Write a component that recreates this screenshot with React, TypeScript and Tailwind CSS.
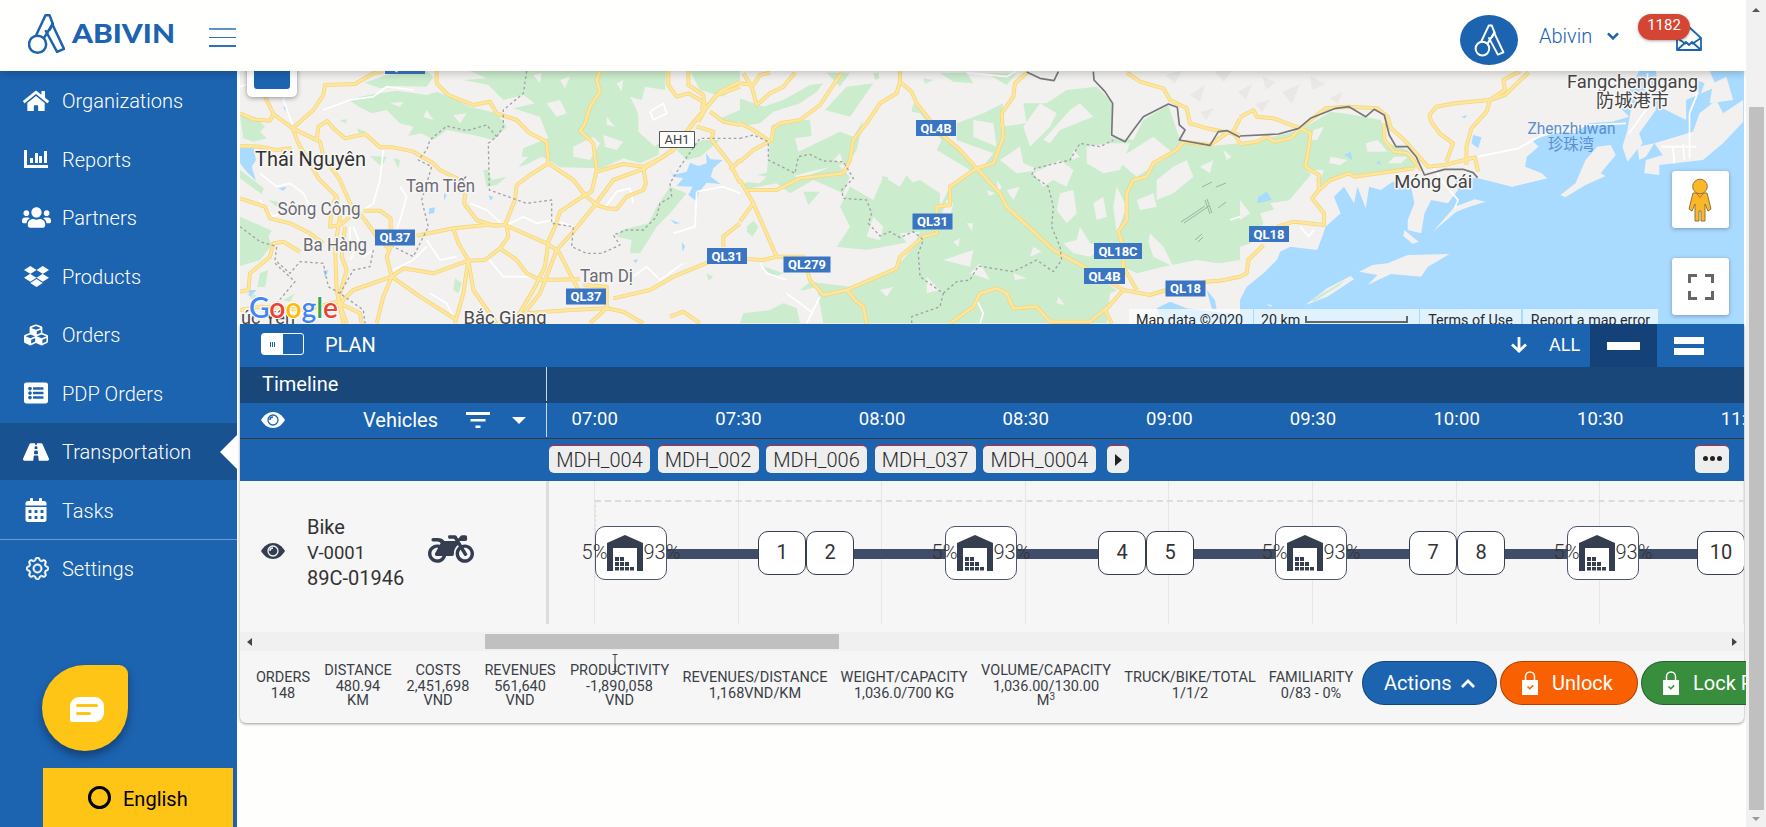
import React from "react";
import {
  FaHome, FaUsers, FaDropbox, FaCubes, FaListAlt, FaRoad, FaCalendarAlt, FaMotorcycle,
} from "react-icons/fa";
import { BsGear } from "react-icons/bs";

const MARK = (
  <g fill="none" strokeLinejoin="round" strokeLinecap="round">
    <circle cx="113" cy="132" r="26" />
    <path d="M109 104 L137 44 H149 L159 70 L150 88" />
    <path d="M133 112 L159 70" />
    <path d="M138 92 L172 155 L193 146 L158 72" />
  </g>
);

const ChartIcon = () => (
  <svg viewBox="0 0 24 18" className="h-[18px] w-[24px]" fill="white">
    <path d="M0 0h3v15h21v3H0z" />
    <path d="M6 8h3v5H6zM11 3h3v10h-3zM15 6h3v7h-3zM20 1h3v12h-3z" />
  </svg>
);

const NAV: { label: string; icon: React.ReactNode; active?: boolean; line?: boolean }[] = [
  { label: "Organizations", icon: <FaHome size={26} /> },
  { label: "Reports", icon: <ChartIcon /> },
  { label: "Partners", icon: <FaUsers size={29} /> },
  { label: "Products", icon: <FaDropbox size={25} /> },
  { label: "Orders", icon: <FaCubes size={24} /> },
  { label: "PDP Orders", icon: <FaListAlt size={24} /> },
  { label: "Transportation", icon: <FaRoad size={26} />, active: true },
  { label: "Tasks", icon: <FaCalendarAlt size={24} />, line: true },
  { label: "Settings", icon: <BsGear size={23} className="ml-[3px]" strokeWidth={0.4} /> },
];

function Header() {
  return (
    <header className="relative z-20 flex h-[71px] shrink-0 items-start bg-[#fffffe] shadow-[0_2px_8px_rgba(0,0,0,0.22)]">
      <svg viewBox="84 38 112 126" className="ml-[28px] mt-[13px] h-[42px] w-[37px]" stroke="#1c63b0" strokeWidth="7.500">{MARK}</svg>
      <svg viewBox="0 0 104 30" className="ml-[7px] mt-[18px] h-[30px] w-[104px] overflow-visible">
        <text x="0" y="25.3" textLength="103" lengthAdjust="spacingAndGlyphs" fill="#1c63b0" fontFamily="Lato, sans-serif" fontWeight="900" fontSize="27">ABIVIN</text>
      </svg>
      <div className="ml-[33px] mt-[28px] flex w-[27px] flex-col gap-[7px]">
        <div className="h-[1.5px] bg-[#5d93ca]" />
        <div className="h-[1.5px] bg-[#2f72b8]" />
        <div className="h-[1.5px] bg-[#2f72b8]" />
      </div>
      <div className="ml-auto mt-[15px] flex h-[50px] w-[58px] items-center justify-center rounded-[50%] bg-[#1c63b0]">
        <svg viewBox="84 38 112 126" className="h-[33px] w-[33px]" stroke="white" strokeWidth="7.500">{MARK}</svg>
      </div>
      <span className="ml-[21px] mt-[21px] w-[52px] text-[20px] leading-[30px] font-light text-[#1c63b0]">Abivin</span>
      <svg viewBox="0 0 12 8" className="ml-[16px] mt-[32px] h-[8px] w-[12px]" fill="none" stroke="#1c63b0" strokeWidth="2.6"><path d="M1 1.3l5 5 5-5" /></svg>
      <div className="relative ml-[57px] mr-[44px] mt-[26px] h-[25px] w-[26px]">
        <svg viewBox="0 0 26 25" className="h-full w-full" fill="none" stroke="#1c63b0" strokeWidth="1.8" strokeLinejoin="round">
          <path d="M1 12L13 1l12 11v12H1z" /><path d="M1 12l9 6M25 12l-9 6M1 24l9-8 3 3 3-3 9 8" />
        </svg>
        <span className="absolute -left-[38px] -top-[12px] flex h-[26px] w-[52px] items-center justify-center rounded-full bg-[#d54533] text-[15px] text-white shadow-[0_1px_3px_rgba(0,0,0,0.35)]">
          <span className="-mt-[3px]">1182</span>
        </span>
      </div>
    </header>
  );
}

function Sidebar() {
  return (
    <nav className="relative flex w-[237px] shrink-0 flex-col bg-[#1c63b0] pt-px text-white">
      {NAV.map((n) => (
        <div key={n.label} className={"relative mb-[1.5px] flex h-[57px] shrink-0 items-center " + (n.active ? "bg-[#195290]" : "")}>
          <div className="ml-[21px] flex w-[30px] justify-center">{n.icon}</div>
          <span className="ml-[11px] pt-px text-[20px] font-light">{n.label}</span>
          {n.active && <div className="ml-auto h-0 w-0 border-y-[17px] border-r-[17px] border-y-transparent border-r-white" />}
          {n.line && <div className="absolute -bottom-px left-0 h-px w-full bg-[#6a9bd0]" />}
        </div>
      ))}
      <div className="ml-[42px] mt-[66px] flex h-[86px] w-[86px] shrink-0 items-center justify-center rounded-[43px] rounded-tr-[9px] bg-[#fec416] shadow-[0_5px_8px_rgba(0,0,0,0.35)]">
        <svg viewBox="0 0 34 25" className="ml-[4px] mt-[3px] h-[25px] w-[34px]">
          <path d="M9 0h16a9 9 0 019 9v7a9 9 0 01-9 9H2a2 2 0 01-2-2V9a9 9 0 019-9z" fill="white" />
          <path d="M7.500 8.500h19M7.500 16.500h12" stroke="#fec416" strokeWidth="3" strokeLinecap="round" />
        </svg>
      </div>
      <div className="ml-[43px] mt-auto flex h-[59px] w-[190px] shrink-0 items-center bg-[#fec416] text-[20px] text-black">
        <div className="ml-[45px] h-[23px] w-[23px] rounded-full border-[3.5px] border-black" />
        <span className="ml-[12px] pt-[2px]">English</span>
      </div>
    </nav>
  );
}

type Tile = { at: string; green: string[]; land: string[]; water: string[]; shore: string[]; minor: string[]; roads: string[]; dash: string[]; border: string[] };

const TILES: Tile[] = [
  {
    at: "translate(240 60) scale(0.33333)",
    green: [
      "690,33 1278,33 1275,90 1215,80 1205,120 1170,110 1190,150 1210,215 1262,240 1255,285 1200,310 1150,295 1085,325 960,322 925,300 905,290 855,315 835,320 865,290 845,290 850,265 910,240 925,235 900,170 820,145 885,130 850,105 790,120 745,75 670,60 740,55",
      "375,68 440,45 560,33 580,52 560,80 470,78 420,85",
      "325,120 385,105 470,92 560,105 590,95 640,115 690,140 770,160 800,200 760,240 700,225 620,210 580,240 545,220 505,228 520,200 480,190 440,150 395,160 365,145",
      "0,165 45,170 75,200 60,215 80,235 40,245 10,235", "0,470 95,512 85,530 95,555 60,600 0,618", "0,330 72,385 65,402 0,355",
      "60,640 85,630 75,680 52,682", "1390,240 1440,240 1380,290 1340,300 1310,270", "1290,380 1340,400 1290,460 1250,500 1200,580 1170,578 1175,540 1130,530 1145,510 1225,490 1250,440",
      "730,330 745,330 755,360 800,350 770,375 740,380", "390,288 440,290 425,320", "460,295 480,300 475,325", "85,420 115,425 110,440", "300,180 320,178 318,192", "130,720 165,700 150,725", "1350,33 1500,33 1500,60 1450,110 1380,90",
      "645,655 640,690 655,700 665,670", "20,700 50,705 40,720", "350,205 378,215 362,228", "1400,640 1420,650 1405,662", "1430,180 1500,150 1500,185 1460,190",
    ],
    land: ["1195,145 1260,95 1345,110 1390,120 1360,180 1330,220 1275,230 1245,260 1195,215", "920,130 960,120 980,160 950,170", "1100,170 1125,200 1100,195", "1000,260 1060,230 1080,250 1050,300 1000,290", "450,130 490,125 480,140", "640,165 680,160 660,190", "560,150 580,180 550,170", "1090,225 1150,245 1130,270 1095,260", "880,45 905,40 900,70", "960,60 990,50 975,85", "1130,70 1150,60 1145,95"],
    water: [
      "0,265 40,262 48,300 35,320 48,362 20,335 0,310", "1288,328 1300,345 1340,335 1350,308 1375,318 1400,310 1398,280 1412,298 1448,300 1420,325 1412,350 1442,372 1400,368 1378,395 1368,422 1345,405 1358,380 1310,378 1330,355 1300,350",
      "568,445 585,442 582,460 566,462", "115,385 140,380 130,392", "250,630 265,632 255,655", "1325,545 1335,560 1328,575", "745,405 760,412 752,422", "1180,600 1195,598 1186,610", "612,400 620,405 612,422", "25,690 50,690 30,710", "130,140 138,140 136,155", "1290,478 1320,490 1305,492",
    ],
    shore: [],
    minor: [
      "150,50 130,120 160,200", "250,150 330,120 400,110 440,80 520,90", "0,80 60,60", "60,340 110,380 150,370 190,400 230,480", "430,270 420,360 400,430 370,450", "480,380 500,410 480,480 470,510", "690,430 740,450 790,495", "800,495 850,470 890,490 940,480 1000,500", "560,540 600,600 650,590", "560,560 520,600 460,630", "740,590 790,650 870,650", "1370,395 1450,380 1500,400", "1370,395 1365,500 1300,520", "1230,155 1270,130 1280,160 1240,180 1230,155", "1180,650 1220,620 1260,660 1330,610", "1090,450 1130,395 1170,385 1180,430", "60,420 100,470 170,430", "340,500 360,550 330,600", "570,700 620,730 650,790", "330,500 330,560 370,590 400,570",
    ],
    roads: [
      "0,160 40,178 90,182 100,162 75,110", "100,162 158,205 180,185 220,150 250,105 255,75 345,72 400,40 430,33", "158,205 175,250 235,355 290,410 300,470 285,560 290,690 310,790", "158,205 240,245 250,290 300,360 330,430 375,480 410,530 450,570", "230,240 235,200 262,183 280,205 315,235 375,222 420,262 460,262 520,275 580,310 600,330 680,370 672,430 710,480 760,497 795,495",
      "590,33 590,70 625,105 700,135 750,125 770,160 830,180 870,220 920,245 925,310 870,345 830,375 825,420 795,495", "925,310 1000,360 1035,405 1070,435 1100,445 1130,447 1160,410 1210,390 1218,370 1210,325", "1080,33 1070,60 1080,95 1050,140 1035,190 1020,212 1060,250 1070,330 1055,395 1035,405 960,455 945,500 925,545 915,620 880,690 820,790",
      "1500,80 1430,105 1360,190 1310,260 1270,290 1210,320 1150,312 1070,335", "1500,65 1440,95 1350,200 1300,270 1215,325 1120,360 1065,435 1000,515 950,570 900,700 830,790", "1285,33 1285,75 1310,110 1345,100 1390,125 1385,150", "1345,33 1345,75 1390,105 1395,150 1375,185", "1410,155 1450,185 1500,195", "1370,200 1420,215 1415,240 1470,310 1500,370", "1470,330 1500,300", "0,258 60,260 110,270 155,265",
      "0,415 75,440 90,475 150,490 210,520 250,550", "0,695 25,690 30,640 90,590 100,550 130,545 180,575", "370,452 420,452 452,475 452,560 440,590 455,650 540,710 650,780", "530,527 640,505 740,495 795,495 920,550 955,573 1015,690", "640,505 655,550 685,600 670,700 645,790", "800,500 805,530 780,565 735,600 685,602 580,640 490,625 455,650 340,690 290,740", "685,602 700,690 770,790", "780,565 830,600 860,640 900,660 1020,658", "455,650 430,710 410,790", "1120,715 1230,690 1300,650 1410,605", "860,760 990,750 1100,745 1150,755 1210,790", "1100,745 1050,790", "1100,745 1100,680 1030,675", "330,470 300,495 270,500 275,440 290,410", "315,500 305,590 320,630 295,720 320,790", "0,750 60,740 200,750 290,725 360,760 365,790", "1450,560 1450,530 1500,490", "1290,770 1330,755 1380,790",
    ],
    dash: ["860,33 850,100 790,150 790,200 770,230 745,250 748,390 860,430 935,420 935,490 1000,500 995,560 1040,580 1085,580 1140,555 1120,525 1160,510 1210,510 1250,470 1260,430 1295,410 1290,370 1320,320 1380,235 1500,235", "770,230 740,195 680,212 620,198 570,240 560,270 535,300 575,320 545,420 565,500 520,590 460,560", "0,500 60,545 110,560 105,600 150,640 180,605 250,610 265,680 300,700 370,750 375,790", "105,610 165,665 110,730", "400,570 390,620 340,630 300,700"],
    border: [],
  },
  {
    at: "translate(740 60) scale(0.33333)",
    green: [
      "0,115 70,140 130,120 210,75 250,70 230,95 180,130 100,155 60,190 0,200", "0,380 50,345 120,330 180,355 250,330 290,310 330,350 310,400 220,360 150,400 110,370 30,385",
      "85,290 95,195 160,180 210,180 215,228 165,235 175,275 300,215 340,230 370,180 350,270 320,310 230,330 150,350 80,340",
      "255,150 320,80 400,70 330,170", "520,130 560,170 720,330 790,420 960,580 1130,690 1110,790 0,790 10,760 90,750 130,730 200,755 230,700 180,690 210,665 330,680 470,620 540,540 380,570 290,560 330,500 300,440 330,380 400,420 430,350 480,380 500,345 550,410 600,440 630,380 690,330 590,270 605,240 540,160 515,155",
      "650,190 730,160 790,130 780,200 860,190 850,130 920,130 980,90 1070,80 1120,130 1110,230 1180,240 1210,180 1285,135 1320,240 1390,260 1500,250 1500,620 1370,600 1270,620 1190,640 1150,620 1130,660 960,590 790,420 720,330 760,280 650,240",
      "480,380 540,360 600,400 600,440 560,460 520,430", "20,500 40,482 55,500 38,530 20,515", "60,615 130,640 100,650", "340,470 390,440 400,500 350,520", "260,38 330,38 300,80", "600,40 680,38 700,70 640,65", "740,40 830,40 800,75", "550,55 580,60 555,72", "400,40 415,38 418,55 405,60", "425,348 445,352 435,375", "190,395 240,395 205,435",
    ],
    land: [
      "400,470 430,500 420,540 380,530", "780,300 840,260 850,310 900,330 830,340", "880,340 960,300 1000,330 980,380 940,360 910,380", "1040,260 1100,250 1170,250 1140,330 1090,340 1040,310", "960,400 1000,390 1010,460 980,490 950,450", "1190,420 1240,400 1250,440 1200,450", "1250,360 1300,320 1340,300 1360,350 1300,400 1250,420", "1130,380 1160,440 1130,520 1120,440", "1020,500 1050,550 1100,560 1050,590 1000,580 970,550 1010,540", "1230,520 1270,560 1300,620 1240,590 1225,545", "900,130 950,160 930,200 870,260 850,200", "700,180 760,190 770,260 700,230", "990,150 1020,130 1060,170 1010,190 960,210 930,250 910,240", "610,600 700,570 690,620", "680,490 700,490 695,512", "770,360 785,380 775,400", "330,590 430,575 400,600 330,610", "160,700 230,680 250,790 180,790", "480,520 540,515 520,560 500,550", "300,280 280,300 310,310", "20,340 80,350 60,370 0,365", "1110,700 1260,640 1500,600 1500,790 1100,790", "1130,300 1240,230 1300,280 1190,350", "620,420 640,430 630,470 600,480", "1060,430 1090,410 1100,470 1070,480", "800,390 840,380 820,420", "560,650 600,690 560,700", "880,560 905,575 870,590", "720,610 750,660 690,640", "1120,90 1210,150 1250,130 1230,160 1180,190 1160,240 1120,220",
      "1380,320 1420,300 1410,340", "1450,270 1475,290 1460,300", "740,390 765,400 748,408", "420,690 460,680 440,710", "955,710 975,735 950,730", "820,640 860,655 825,660", "640,545 660,535 655,560", "1000,270 1020,290 995,300",
    ],
    water: ["1400,690 1425,720 1430,750 1415,745", "1250,745 1290,725 1340,745 1500,765 1500,790 1270,790"],
    shore: [],
    minor: ["680,38 800,50 830,33", "60,610 80,640 140,660", "240,710 200,790", "710,720 730,760 720,790", "140,700 220,760", "1500,470 1470,480"],
    roads: [
      "0,70 40,75 60,45 90,38", "165,38 130,80 90,100 50,135 35,80 10,40", "305,38 270,90 240,135 180,180 120,190 100,205 95,240 40,270 0,305", "0,190 40,210 90,245", "480,33 480,65 515,95 530,130 600,220 655,265 710,325 780,400 800,440 940,570 1040,625 1150,690 1230,705 1280,690 1340,685",
      "480,65 470,100 420,130 380,190 340,240 330,300 310,340 180,355 110,390 20,390", "0,360 40,430 110,590 70,600 20,597", "0,485 40,430", "110,590 190,590 210,660 250,705 320,690 470,625 480,590 550,530 590,520 590,440 630,435 630,380 710,325 760,310 790,230 785,160 820,110 825,70 860,38",
      "320,690 350,725 370,740 380,790", "630,790 700,740 720,700 770,685 800,700 820,745 890,740 930,785 1050,785 1110,735 1150,690", "1110,735 1095,750 1115,790", "1190,690 1150,620 1150,560 1135,515 1160,480 1160,400 1180,360 1220,350 1240,310 1310,270 1330,245 1410,255 1460,220 1480,215 1500,250", "1160,38 1200,65 1270,85 1290,120 1340,145 1350,190 1400,205 1500,225", "1480,215 1500,175", "1390,665 1440,662 1500,650",
    ],
    dash: ["0,235 40,225 85,245 85,300 165,340 175,290 210,283 250,303 310,305 340,355 305,390 310,415 380,420 395,460 385,490 420,528 450,515 480,533 520,515 550,540 535,580 540,650 610,700 600,740 515,770 515,790", "610,700 650,665 690,660 715,618 820,635 890,600 940,635 965,600 960,560 935,500 940,440 925,380 875,345 885,325 990,300 1020,250 1080,260 1120,240"],
    border: ["860,36 900,55 942,62 955,35", "1060,35 1062,60 1095,95 1118,130 1115,225 1155,245 1180,210 1210,170 1285,132 1312,142 1318,195 1335,210 1318,240 1410,256 1435,215 1462,212 1500,232"],
  },
  {
    at: "translate(1240 0) scale(0.33546 0.33333)",
    green: ["0,435 60,420 180,390 270,335 340,345 420,360 440,430 500,450 525,505 430,515 340,525 270,535 235,560 215,520 130,620 60,640 70,670 30,730 0,740"],
    land: ["190,550 240,570 200,620 110,640 90,610 150,600", "200,510 250,510 235,550", "375,430 410,420 440,455 380,455", "0,600 30,640 0,660", "220,390 250,380 230,420 210,420", "460,470 500,470 480,490 440,490", "270,470 320,480 300,495 265,490"],
    water: [
      "0,990 0,900 20,860 70,820 110,780 120,755 150,740 230,750 245,710 255,680 300,640 280,590 310,560 340,610 350,560 375,625 385,560 420,570 455,545 510,560 520,610 500,660 500,690 540,700 550,640 570,600 620,610 650,570 640,530 710,535 810,560 915,535 900,520 850,500 855,470 890,440 870,420 940,400 1000,400 1040,370 1110,365 1160,350 1130,320 1150,290 1190,213 1240,213 1250,320 1330,360 1330,300 1420,260 1400,213 1505,213 1505,990",
      "310,465 330,455 335,480", "405,490 415,482 420,495", "695,405 720,412 710,445 690,430", "55,590 80,575 95,600 50,610", "660,350 678,345 670,355", "1360,240 1385,250 1370,290", "1420,230 1500,240 1500,300 1440,260",
    ],
    shore: [
      "490,690 532,725 515,732 487,708", "575,695 640,620 700,598 732,605 680,622 645,635", "380,855 410,825 355,815 395,795 440,790 500,765 625,762 560,800 540,830 450,822", "195,915 260,865 330,828 340,838 260,890",
      "955,585 1000,550 1030,480 1065,440 1105,435 1120,465 1075,520 1090,528 1030,555 970,592", "1155,390 1165,330 1230,280 1240,330 1190,400 1200,430 1155,485 1140,440", "1205,520 1210,480 1260,465 1235,430 1350,395 1370,340 1420,300 1440,340 1500,300 1500,365 1440,430 1380,480 1250,495 1250,525", "1185,440 1235,430 1210,470 1190,480",
      "1410,250 1450,230 1470,300 1400,310", "80,912 97,916 90,920", "810,560 915,535 860,510 820,540",
    ],
    minor: ["710,470 830,445 900,405 1040,375 1150,370", "1160,400 1210,330 1215,220", "1360,240 1360,290 1340,340 1340,475", "1255,440 1360,440", "1290,440 1295,490", "1320,430 1325,480", "570,490 600,540 650,600 640,625", "180,680 205,710 220,690"],
    roads: [
      "0,352 40,330 50,350 100,355 180,385 210,400 205,440 195,500 235,525 235,570", "0,432 50,425 80,410 100,425 150,415 180,385 210,360 255,325 320,320 410,325 440,350 450,385 490,420 525,460 560,500 610,495 700,472 710,515", "430,370 430,420 460,455 500,460 540,510", "520,505 340,530 325,520 270,540 235,570 215,595 250,640 250,675 160,665 110,680", "0,830 20,820 25,780 70,735", "860,217 790,285 745,300 735,335 690,385 675,440 675,495", "835,213 785,240 790,270 745,300 640,310 585,320 565,345 570,365 595,400 635,430 615,485",
    ],
    dash: [],
    border: ["0,408 115,402 175,385 210,355 285,325 325,320 375,350 400,328 430,345 445,405 465,440 500,440 525,470 550,525 610,508 665,508 695,518 708,533"],
  },
];

const HILLS = ["1165,75 1182,70 1175,84", "1190,95 1205,85 1200,102", "1215,72 1235,66 1224,82", "1238,92 1252,84 1246,100", "1262,76 1276,82 1266,90", "1282,92 1300,84 1292,104", "1255,104 1270,100 1262,112", "1310,76 1326,84 1312,90", "1200,112 1214,108 1206,120", "1330,98 1342,92 1338,104"];

const SHIELDS: [number, number, number, string][] = [
  [405, 66, 40, "QL1B"], [395, 237.500, 40, "QL37"], [586, 296.500, 40, "QL37"], [727, 256, 40, "QL31"], [807, 264.500, 47, "QL279"], [936, 128, 40, "QL4B"], [932.5, 221.500, 40, "QL31"],
  [1118, 251, 48, "QL18C"], [1104.5, 276, 41, "QL4B"], [1185.500, 288.500, 40, "QL18"], [1269, 234, 40, "QL18"],
];

const PLACES: [number, number, number, number, string, string][] = [
  [255, 165.500, 111, 20, "#333", "Thái Nguyên"], [406, 192, 69, 17.500, "#6b6b76", "Tam Tiến"], [277.500, 215, 83, 17.500, "#6b6b76", "Sông Công"], [303, 251, 64, 17.500, "#6b6b76", "Ba Hàng"],
  [580, 282, 53, 17.500, "#6b6b76", "Tam Dị"], [463.500, 324, 83, 17.500, "#4a4a4a", "Bắc Giang"], [241, 324, 54, 17.500, "#4a4a4a", "úc Yên"], [1394.300, 188, 78, 18, "#444", "Móng Cái"],
  [1567, 88, 131, 18, "#444", "Fangchenggang"], [1596, 107, 73, 18, "#444", "防城港市"], [1527.500, 133.500, 88, 16, "#5b8fd0", "Zhenzhuwan"], [1548, 150, 46, 15.500, "#5b8fd0", "珍珠湾"],
];

function MapView() {
  const layer = (draw: (t: Tile) => React.ReactNode) => TILES.map((t, i) => <g key={i} transform={t.at}>{draw(t)}</g>);
  return (
    <div className="relative h-[253px] shrink-0 overflow-hidden bg-[#f2f1f0]">
      <svg viewBox="240 71 1504 253" className="block h-[253px] w-[1504px]" fontFamily="Roboto, 'Noto Sans CJK SC', sans-serif" strokeLinejoin="round">
        {HILLS.map((p) => <polygon key={p} points={p} fill="#e9e8e5" />)}
        {layer((t) => t.green.map((p, i) => <polygon key={i} points={p} fill="#cbeccd" />))}
        {layer((t) => t.land.map((p, i) => <polygon key={i} points={p} fill="#f2f1f0" />))}
        {layer((t) => t.water.map((p, i) => <polygon key={i} points={p} fill="#a9daff" />))}
        {layer((t) => t.shore.map((p, i) => <polygon key={i} points={p} fill="#f2f1f0" />))}
        {layer((t) => t.minor.map((p, i) => <polyline key={i} points={p} fill="none" stroke="#ffffff" strokeWidth="5" />))}
        <polygon points="1310,301 1345,280 1340,285 1315,301" fill="#cbeccd" />
        {layer((t) => t.roads.map((p, i) => <polyline key={i} points={p} fill="none" stroke="#f6d77b" strokeWidth="12" />))}
        {layer((t) => t.roads.map((p, i) => <polyline key={i} points={p} fill="none" stroke="#fde7a0" strokeWidth="7" />))}
        {layer((t) => t.dash.map((p, i) => <polyline key={i} points={p} fill="none" stroke="#a2a2a6" strokeWidth="4" strokeDasharray="8 8" />))}
        {layer((t) => t.border.map((p, i) => <polyline key={i} points={p} fill="none" stroke="#77777b" strokeWidth="5" />))}
        <g stroke="#8fa394" strokeWidth="0.8">
          <path d="M1181 222l24-16M1184 223l25-17M1205 200l5 14M1207 199l5 14M1202 187l10-5M1216 187l10-4M1218 208l8-6M1195 240l7-6M1198 242l5-5" />
        </g>
        {PLACES.map(([x, y, w, s, c, t]) => (
          <text key={t} x={x} y={y} textLength={w} lengthAdjust="spacingAndGlyphs" fontSize={s} fill={c} stroke="#f7f6f5" strokeWidth={c === "#5b8fd0" ? 0 : 3} paintOrder="stroke">{t}</text>
        ))}
        {SHIELDS.map(([cx, cy, w, t], i) => (
          <g key={i}>
            <rect x={cx - w / 2} y={cy - 8} width={w} height="16" fill="#3a75c4" />
            <text x={cx} y={cy + 4.700} textAnchor="middle" fontSize="13" fontWeight="700" fill="white" textLength={w - 9} lengthAdjust="spacingAndGlyphs">{t}</text>
          </g>
        ))}
        <rect x="659.500" y="131.500" width="35" height="16" fill="white" stroke="#555" />
        <text x="677" y="144" textAnchor="middle" fontSize="13" fill="#444">AH1</text>
        <text x="249" y="318" fontSize="29" fontFamily="Lato, sans-serif" fontWeight="600" textLength="89" lengthAdjust="spacingAndGlyphs" stroke="white" strokeWidth="2" paintOrder="stroke">
          <tspan fill="#4285f4">G</tspan><tspan fill="#ea4335">o</tspan><tspan fill="#fbbc05">o</tspan><tspan fill="#4285f4">g</tspan><tspan fill="#34a853">l</tspan><tspan fill="#ea4335">e</tspan>
        </text>
      </svg>
      <div className="absolute -top-[20px] left-[7px] h-[46px] w-[50px] rounded-[5px] bg-white p-[7px] shadow-[0_1px_5px_rgba(0,0,0,0.4)]">
        <div className="h-[31px] rounded-[3px] bg-[#1c63b0]" />
      </div>
      <div className="absolute left-[889px] top-[238px] flex h-[25px] text-[14.3px] leading-[23px] whitespace-nowrap text-[#2a2a2a]">
        <div className="w-[124px] bg-white/65 pl-[7px]">Map data ©2020</div>
        <div className="ml-px flex w-[165px] bg-white/65 pl-[7px]">20 km<div className="ml-[5px] mt-[7px] h-[7px] w-[103px] border-2 border-t-0 border-[#666]" /></div>
        <div className="ml-px w-[101px] bg-white/65 text-center">Terms of Use</div>
        <div className="ml-[2px] w-[135px] bg-white/65 text-center">Report a map error</div>
      </div>
      <div className="absolute left-[1432px] top-[100px] flex h-[57px] w-[57px] items-center justify-center rounded-[3px] bg-white shadow-[0_1px_4px_rgba(0,0,0,0.3)]">
        <svg viewBox="0 0 26 44" className="ml-[-2px] h-[44px] w-[26px]" stroke="#8f7340" strokeWidth="1" fill="#fbb826">
          <path d="M6 15h14l4 16-3 2-3-7v17h-4V33h-2v10H8V26l-3 7-3-2z" /><circle cx="13" cy="8.500" r="7.300" /><path d="M9.500 15.500l3.500 4 3.500-4" stroke="#e0651f" fill="none" />
        </svg>
      </div>
      <div className="absolute left-[1432px] top-[187px] flex h-[57px] w-[57px] items-center justify-center rounded-[3px] bg-white shadow-[0_1px_4px_rgba(0,0,0,0.3)]">
        <svg viewBox="0 0 26 26" className="h-[26px] w-[26px]" fill="none" stroke="#666" strokeWidth="3"><path d="M1.500 9V1.500H9M17 1.500h7.500V9M24.500 17v7.500H17M9 24.500H1.500V17" /></svg>
      </div>
    </div>
  );
}

const Eye = ({ color, hole }: { color: string; hole: string }) => (
  <svg viewBox="0 0 24 16" className="h-[16px] w-[24px] shrink-0">
    <path d="M0 8C3 3 7 0 12 0s9 3 12 8c-3 5-7 8-12 8S3 13 0 8z" fill={color} />
    <circle cx="12" cy="8" r="5" fill="none" stroke={hole} strokeWidth="1.300" />
    <path d="M9 8a3 3 0 013-3" fill="none" stroke={hole} strokeWidth="1.500" />
  </svg>
);

const TIMES = ["07:00", "07:30", "08:00", "08:30", "09:00", "09:30", "10:00", "10:30", "11:00"];
const CHIP = "flex h-[28px] shrink-0 items-center justify-center rounded-[5px] border-t border-[#c8242c] bg-[#eeeeee] text-[#2b2b2b]";

const Warehouse = () => (
  <div className="relative z-10 flex h-[54px] w-[72px] shrink-0 items-center justify-center rounded-[10px] border border-[#4b566b] bg-white text-[20px] font-light whitespace-nowrap text-[#333]">
    <span className="-mt-[2px]">5%</span>
    <svg viewBox="0 0 36 36" className="-mt-px h-[36px] w-[36px] shrink-0" fill="#343e50">
      <path d="M0 8L18 0l18 8v28h-6V13H6v23H0z" />
      <path d="M8 22h4v4H8zM13 22h4v4h-4zM8 27h4v4H8zM13 27h4v4h-4zM18 27h4v4h-4zM8 32h4v3.500H8zM13 32h4v3.500h-4zM18 32h4v3.500h-4zM23 32h4v3.500h-4z" />
    </svg>
    <span className="-mt-[2px]">93%</span>
  </div>
);
const Stop = ({ n }: { n: number }) => (
  <div className="-mt-px flex h-[44px] w-[48px] shrink-0 items-center justify-center rounded-[10px] border border-[#343e50] bg-white pb-px text-[20px] text-[#333]">{n}</div>
);
const Seg = ({ w }: { w: string }) => <div className={"mt-[2px] h-[10px] shrink-0 bg-[#3f4d68] " + w} />;

const STATS: [string, string, string[]][] = [
  ["w-[53px]", "ORDERS", ["148"]],
  ["w-[67px]", "DISTANCE", ["480.94", "KM"]],
  ["w-[63px]", "COSTS", ["2,451,698", "VND"]],
  ["w-[71px]", "REVENUES", ["561,640", "VND"]],
  ["w-[98px]", "PRODUCTIVITY", ["-1,890,058", "VND"]],
  ["w-[143px]", "REVENUES/DISTANCE", ["1,168VND/KM"]],
  ["w-[125px]", "WEIGHT/CAPACITY", ["1,036.0/700 KG"]],
  ["w-[129px]", "VOLUME/CAPACITY", ["1,036.00/130.00", "M3"]],
  ["w-[129px]", "TRUCK/BIKE/TOTAL", ["1/1/2"]],
  ["w-[83px]", "FAMILIARITY", ["0/83 - 0%"]],
];

const Lock = ({ c }: { c: string }) => (
  <svg viewBox="0 0 16 24" className="h-[24px] w-[16px]">
    <path d="M3.500 9V5.500a4.500 4.500 0 019 0V9" fill="none" stroke="white" strokeWidth="1.500" />
    <path d="M0 9h16v15H0z" fill="white" /><path d="M5.500 15.500l2.300 2.300 3.400-3.400" fill="none" stroke={c} strokeWidth="1.500" />
  </svg>
);

const BTN = "flex h-[44px] shrink-0 items-center rounded-full border border-black/30 text-[20px] text-white whitespace-nowrap";

function Plan() {
  return (
    <section className="flex h-[399px] shrink-0 flex-col rounded-b-[6px] bg-[#f6f6f6] shadow-[0_1px_3px_rgba(0,0,0,0.4)]">
      <div className="flex h-[43px] shrink-0 items-center bg-[#1c63b0] text-white">
        <div className="-mt-[3px] ml-[21px] flex h-[22px] w-[43px] rounded-[3px] border border-white">
          <div className="flex w-[21px] items-center justify-center gap-px bg-white">
            <i className="h-[5px] w-px bg-[#1c63b0]" /><i className="h-[5px] w-px bg-[#1c63b0]" /><i className="h-[5px] w-px bg-[#1c63b0]" />
          </div>
        </div>
        <span className="-mt-[2px] ml-[21px] text-[20px]">PLAN</span>
        <svg viewBox="0 0 16 16" className="-mt-[2px] ml-auto h-[16px] w-[16px]" fill="none" stroke="white" strokeWidth="2.800"><path d="M8 0v14M1 7.500l7 6.500 7-6.500" /></svg>
        <span className="-mt-[2px] ml-[22px] w-[41px] text-[18px]">ALL</span>
        <div className="flex h-full w-[67px] items-center justify-center bg-[#144278]"><div className="h-[8px] w-[33px] bg-white" /></div>
        <div className="mr-[40px] ml-[17px] flex w-[30px] flex-col gap-[4px]"><div className="h-[7px] bg-white" /><div className="h-[7px] bg-white" /></div>
      </div>
      <div className="flex h-[36px] shrink-0 bg-[#19477a] text-white">
        <div className="mb-[2px] w-[307px] border-r border-[#cdd8e5] pl-[22px] text-[20px] leading-[34px]">Timeline</div>
      </div>
      <div className="flex h-[36px] shrink-0 border-b border-[#3a3a3a] bg-[#1c63b0] text-white">
        <div className="mb-px flex w-[307px] shrink-0 items-center border-r border-[#cdd8e5]">
          <div className="ml-[21px] flex"><Eye color="white" hole="#1c63b0" /></div>
          <span className="-mt-px ml-[78px] w-[76px] text-[20px]">Vehicles</span>
          <svg viewBox="0 0 24 16" className="ml-[27px] h-[16px] w-[24px]" fill="white"><path d="M0 0h24v3H0zM4.500 7h15v2.500h-15zM9.500 13.500h5V16h-5z" /></svg>
          <svg viewBox="0 0 14 7" className="ml-[22px] mt-px h-[7px] w-[14px]" fill="white"><path d="M0 0h14L7 7z" /></svg>
        </div>
        <div className="min-w-0 flex-1 overflow-hidden">
          <div className="-ml-[24px] flex h-full items-center pb-px">
            {TIMES.map((t) => <div key={t} className="w-[143.65px] shrink-0 text-center text-[18.500px] tracking-[0.1px]">{t}</div>)}
          </div>
        </div>
      </div>
      <div className="flex h-[42px] shrink-0 items-start gap-[7.500px] bg-[#1c63b0] pl-[309px] pr-[15px] pt-[6px] text-[20px] font-light">
        {["MDH_004", "MDH_002", "MDH_006", "MDH_037"].map((c) => <div key={c} className={CHIP + " w-[101px]"}>{c}</div>)}
        <div className={CHIP + " w-[112.500px]"}>MDH_0004</div>
        <div className={CHIP + " ml-[4px] w-[22px]"}><svg viewBox="0 0 7 12" className="h-[12px] w-[7px]"><path d="M0 0l7 6-7 6z" fill="#222" /></svg></div>
        <div className={CHIP + " ml-auto w-[34px] gap-[2px]"}>
          <i className="mb-[3px] h-[5px] w-[5px] rounded-full bg-[#222]" /><i className="mb-[3px] h-[5px] w-[5px] rounded-full bg-[#222]" /><i className="mb-[3px] h-[5px] w-[5px] rounded-full bg-[#222]" />
        </div>
      </div>
      <div className="flex h-[143px] shrink-0">
        <div className="flex w-[309px] shrink-0 items-start border-r-[3px] border-[#dddddd] text-[#333]">
          <div className="ml-[21px] mt-[62px] flex"><Eye color="#343e50" hole="#f6f6f6" /></div>
          <div className="ml-[22px] mt-[34px] w-[100px] text-[20px] leading-[25.500px]">
            <div>Bike</div><div className="text-[18.500px]">V-0001</div><div>89C-01946</div>
          </div>
          <FaMotorcycle className="ml-[21px] mt-[45px] text-[#343e50]" size={46} />
        </div>
        <div className="relative min-w-0 flex-1 overflow-hidden">
          <div className="absolute inset-0 ml-[45px] flex">
            {TIMES.map((t) => <div key={t} className="w-[143.6px] shrink-0 border-l border-[#e6e6e6]" />)}
          </div>
          <div className="absolute left-[46px] top-[19px] h-[46px] w-[1200px] border-l border-t-2 border-dashed border-[#dcdcdc]" />
          <div className="relative ml-[46px] mt-[45px] flex h-[54px] w-max items-center">
            <Warehouse /><Seg w="w-[91px]" /><Stop n={1} /><Stop n={2} /><Seg w="w-[91px]" />
            <Warehouse /><Seg w="w-[81px]" /><Stop n={4} /><Stop n={5} /><Seg w="w-[81px]" />
            <Warehouse /><Seg w="w-[62px]" /><Stop n={7} /><Stop n={8} /><Seg w="w-[62px]" />
            <Warehouse /><Seg w="w-[58px]" /><Stop n={10} />
          </div>
        </div>
      </div>
      <div className="mt-[8px] flex h-[19px] shrink-0 items-center bg-[#f0f0f0]">
        <div className="ml-[7px] h-0 w-0 border-y-[4px] border-r-[5px] border-y-transparent border-r-[#444]" />
        <div className="ml-[233px] h-[15px] w-[354px] bg-[#c0c0c0]" />
        <div className="ml-auto mr-[7px] h-0 w-0 border-y-[4px] border-l-[5px] border-y-transparent border-l-[#444]" />
      </div>
      <div className="flex min-h-0 flex-1 items-start">
        <div className="ml-[16.500px] flex h-[70px] items-center gap-[15px] text-[14.500px] text-[#3a3f47]">
          {STATS.map(([w, label, vals]) => (
            <div key={label} className={"flex shrink-0 flex-col items-center whitespace-nowrap " + w}>
              <div className="mb-[2.5px] leading-[14px]">{label}</div>
              {vals.map((v) => <div key={v} className="leading-[14px]">{v === "M3" ? <>M<sup className="text-[10px]">3</sup></> : v}</div>)}
            </div>
          ))}
        </div>
        <div className="relative -mr-[2px] ml-auto mt-[10px] flex w-[384px] gap-[3px] overflow-hidden">
          <div className={BTN + " w-[135px] bg-[#1c63b0] pl-[21px]"}>Actions<svg viewBox="0 0 14 9" className="ml-[9px] h-[9px] w-[14px]" fill="none" stroke="white" strokeWidth="2.800"><path d="M1 8l6-6 6 6" /></svg></div>
          <div className={BTN + " w-[138px] gap-[14px] bg-[#f96002] pl-[21px]"}><Lock c="#f96002" />Unlock</div>
          <div className={BTN + " w-[150px] gap-[14px] bg-[#388e3c] pl-[21px]"}><Lock c="#388e3c" />Lock Plan</div>
        </div>
      </div>
    </section>
  );
}

export default function App() {
  return (
    <div className="flex h-[827px] w-[1766px] overflow-hidden bg-[#fefefd] font-[Roboto,'Noto_Sans_CJK_SC',sans-serif]">
      <div className="flex w-[1746px] shrink-0 flex-col">
        <Header />
        <div className="flex min-h-0 flex-1">
          <Sidebar />
          <main className="relative ml-[3px] flex w-[1504px] shrink-0 flex-col">
            <MapView />
            <Plan />
            <svg viewBox="0 0 6 18" className="absolute left-[372px] top-[583px] h-[18px] w-[6px]" fill="none" stroke="#444" strokeWidth="1"><path d="M0.500 0.500h5M3 0.500v17M0.500 17.500h5" /></svg>
          </main>
        </div>
      </div>
      <div className="relative z-30 flex w-[20px] shrink-0 flex-col items-center bg-[#f1f1f1]">
        <div className="mt-[8px] h-0 w-0 border-x-[4px] border-b-[4px] border-x-transparent border-b-[#555]" />
        <div className="mt-[95px] h-[703px] w-[15px] bg-[#c0c0c0]" />
        <div className="mt-[7px] h-0 w-0 border-x-[4px] border-t-[4px] border-x-transparent border-t-[#999]" />
      </div>
    </div>
  );
}
